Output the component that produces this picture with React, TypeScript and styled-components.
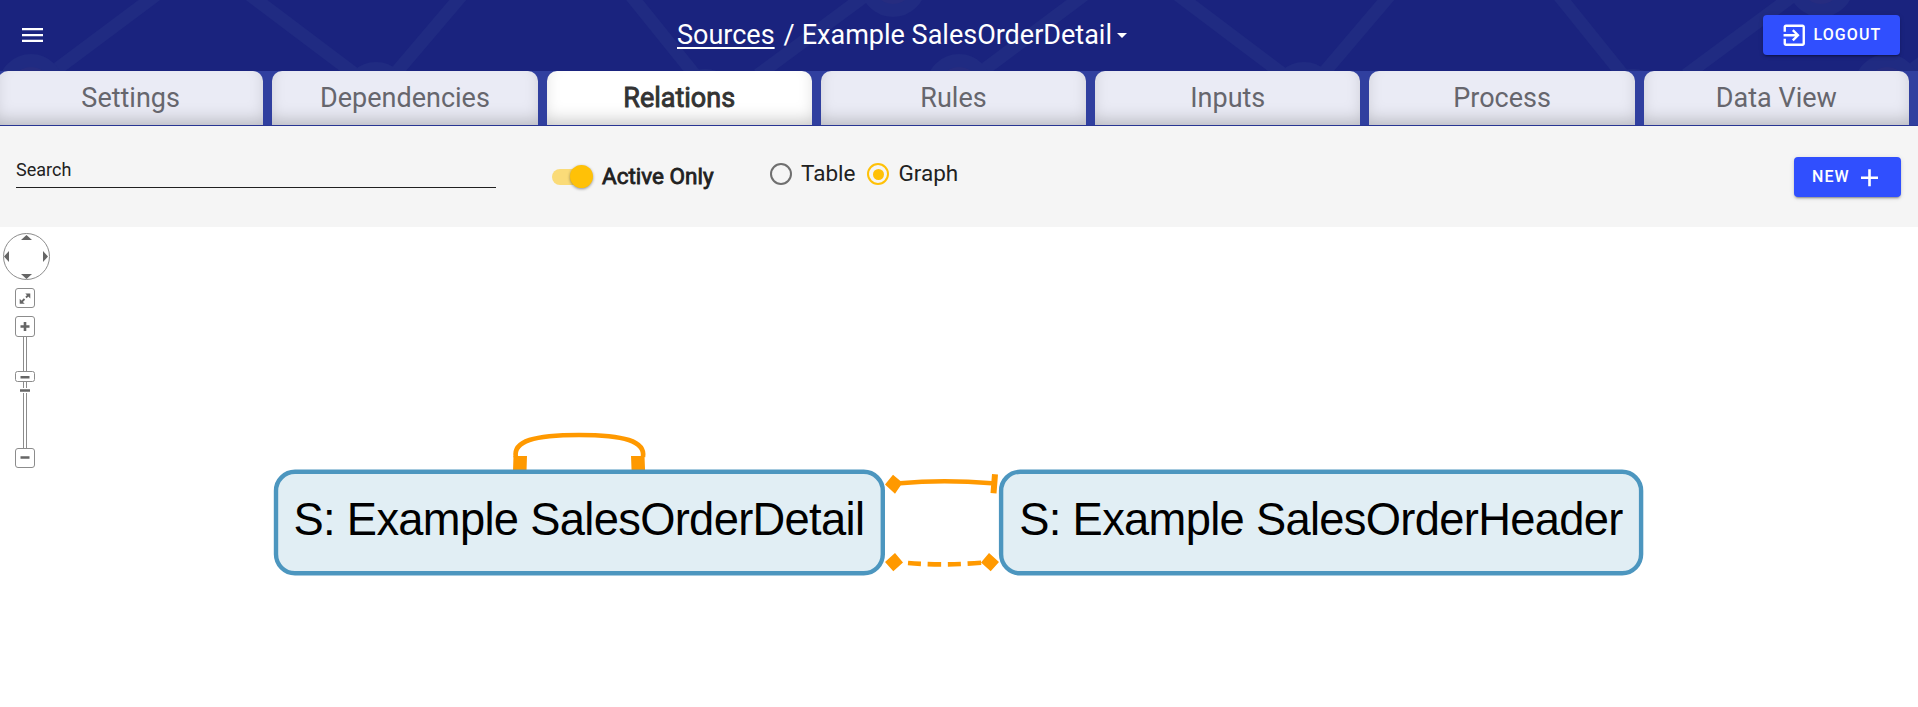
import React from 'react';
import styled, { createGlobalStyle } from 'styled-components';

const Global = createGlobalStyle`
  * { box-sizing: border-box; }
  body { margin: 0; background: #fff; font-family: Roboto, "Liberation Sans", sans-serif; overflow: hidden; }
`;

const Page = styled.div`
  width: 1918px;
  height: 707px;
  display: flex;
  flex-direction: column;
`;

const Header = styled.header`
  position: relative;
  height: 71px;
  background: #1a237e;
  display: grid;
  grid-template-columns: 655px auto 1fr;
  align-items: center;
  padding: 0 18px 1px 22px;
  color: #fff;
`;

const Pattern = styled.svg`
  position: absolute;
  inset: 0;
`;

const MenuIcon = styled.svg`
  position: relative;
  display: block;
`;

const Crumbs = styled.div`
  position: relative;
  display: flex;
  align-items: center;
  font-size: 27px;
  line-height: 32px;
  white-space: pre;
`;

const Link = styled.a`
  text-decoration: underline;
  text-decoration-thickness: 2px;
  text-underline-offset: 3px;
`;

const Slash = styled.span`
  margin: 0 7px 0 9px;
`;

const Caret = styled.span`
  margin: 0 0 0 5px;
  border: 5px solid transparent;
  border-top-color: #fff;
  border-bottom: 0;
`;

const Button = styled.button<{ $width: number }>`
  position: relative;
  justify-self: end;
  width: ${(p) => p.$width}px;
  height: 40px;
  border: 0;
  border-radius: 4px;
  padding: 0 0 0 18px;
  background: #304ffe;
  color: #fff;
  display: flex;
  align-items: center;
  font: 500 16px/20px Roboto, sans-serif;
  letter-spacing: 1.1px;
  box-shadow: 0 3px 1px -2px rgba(0, 0, 0, 0.2), 0 2px 2px rgba(0, 0, 0, 0.14), 0 1px 5px rgba(0, 0, 0, 0.12);
`;

const ExitIcon = styled.svg`
  margin: 1px 5px 0 -1px;
`;

const PlusIcon = styled.svg`
  margin-left: 1px;
`;

const Tabs = styled.nav`
  height: 55px;
  background: #303f9f;
  border-bottom: 1px solid #283593;
  display: flex;
  gap: 9px;
  padding-right: 9px;
  margin-left: -2px;
`;

const Tab = styled.div<{ $active?: boolean }>`
  flex: 1 1 0;
  display: flex;
  align-items: center;
  justify-content: center;
  border-radius: 10px 10px 0 0;
  background: ${(p) => (p.$active ? '#fff' : '#eaebf5')};
  color: ${(p) => (p.$active ? '#333' : '#66666d')};
  font-size: 27px;
  -webkit-text-stroke: ${(p) => (p.$active ? '0.9px #333' : '0')};
  box-shadow: inset 0 -9px 18px -6px rgba(0, 0, 0, 0.25);
`;

const Toolbar = styled.div`
  height: 101px;
  background: #f5f5f5;
  display: flex;
  align-items: flex-start;
  padding: 0 17px 0 16px;
  color: #212121;
`;

const Search = styled.div`
  width: 480px;
  height: 62px;
  padding-top: 33px;
  border-bottom: 1px solid #212121;
  font-size: 18px;
  line-height: 22px;
`;

const Switch = styled.div`
  width: 41px;
  height: 23px;
  margin: 39px 0 0 56px;
  display: flex;
  align-items: center;
`;

const Track = styled.div`
  width: 36px;
  height: 16px;
  border-radius: 8px;
  background: #fadb78;
  display: flex;
  align-items: center;
`;

const Knob = styled.div`
  flex: none;
  width: 23px;
  height: 23px;
  margin-left: 18px;
  border-radius: 50%;
  background: #ffc107;
  box-shadow: 0 1px 3px rgba(0, 0, 0, 0.4);
`;

const SwitchLabel = styled.div`
  margin: 37px 57px 0 9px;
  width: 111px;
  font-size: 22.5px;
  line-height: 27px;
  -webkit-text-stroke: 0.8px #212121;
  white-space: nowrap;
`;

const Radio = styled.label`
  margin: 33px 12px 0 0;
  display: flex;
  align-items: center;
  gap: 9px;
  font-size: 22.5px;
  line-height: 28px;
`;

const Ring = styled.span<{ $on?: boolean }>`
  width: 22px;
  height: 22px;
  margin-top: 2px;
  border-radius: 50%;
  border: 2px solid ${(p) => (p.$on ? '#ffc107' : '#6f6f6f')};
  padding: 3.5px;
  background: ${(p) => (p.$on ? '#ffc107' : 'transparent')} content-box;
`;

const ToolbarEnd = styled.div`
  margin: 31px 0 0 auto;
`;

const Canvas = styled.svg`
  display: block;
  flex: none;
`;

const tabs = ['Settings', 'Dependencies', 'Relations', 'Rules', 'Inputs', 'Process', 'Data View'];

function HeaderPattern() {
  return (
    <Pattern width="1918" height="71">
      <g stroke="#202b82" strokeWidth="13">
        {[-928, 0, 928, 1856].map((x) => (
          <g key={x} transform={`translate(${x} 0)`}>
            <path
              fill="none"
              d="M49 75 L156 -5 M250 -5 L356 75 M394 75 L462 -5 M630.5 -5 L695 75 M758 75 L866 -5"
            />
            <g fill="#262c80">
              <circle cx="31" cy="87" r="26.5" />
              <circle cx="376" cy="95" r="26.5" />
              <circle cx="705" cy="102" r="26.5" />
              <circle cx="893" cy="-16" r="26.5" />
            </g>
          </g>
        ))}
      </g>
    </Pattern>
  );
}

function Navigator() {
  return (
    <g fill="none" stroke="#8c8c8c">
      <circle cx="26.5" cy="29.5" r="23" fill="#fff" />
      <g fill="#666" stroke="none">
        <path d="M21 13h11l-5.5-5zM21 47h11l-5.5 5zM9 24v11l-5-5.5zM43 24v11l5-5.5z" />
      </g>
      <path d="M23.5 109V222M26.5 109V222" />
      <rect x="15.5" y="61.5" width="19" height="19" rx="2.5" fill="#fff" />
      <rect x="15.5" y="89.5" width="19" height="20" rx="2.5" fill="#fff" />
      <rect x="15.5" y="221.5" width="19" height="19" rx="2.5" fill="#fff" />
      <rect x="15.5" y="144.5" width="19" height="10" rx="2" fill="#fff" />
      <rect x="20" y="161" width="10" height="5" fill="#fff" stroke="none" />
      <g stroke="#666" strokeWidth="2.6">
        <path d="M20.5 99.5h9M25 95v9M20.5 150.2h9M20 163.5h10M20.5 230.5h9" />
      </g>
      <path d="M21.5 75l3-3M26 70.5l3-3" stroke="#666" strokeWidth="1.8" />
      <path d="M30.3 66.5v5l-5-5zM19.7 76.8v-5l5 5z" fill="#666" stroke="none" />
    </g>
  );
}

function Graph() {
  return (
    <Canvas width="1918" height="480" viewBox="0 0 1918 480">
      <Navigator />
      <g fill="none" stroke="#ff9900" strokeWidth="4.6">
        <path d="M515.8 230C513 214 534 208 579 208S645.5 214 643 230" />
        <path d="M900 256.3Q943 252.3 992 256.3" />
        <path d="M908 336Q943 339 984 335.5" strokeDasharray="13.3 6.7" />
      </g>
      <g fill="#ff9900">
        <path d="M513.5 229h13.5l-.5 15h-13.5zM631 229h13.5l.6 15h-13.5z" />
      </g>
      <g fill="#e1eef4" stroke="#4c96bf" strokeWidth="4.4">
        <rect x="276" y="244.8" width="606.8" height="101.5" rx="19" />
        <rect x="1001.1" y="244.8" width="640" height="101.5" rx="19" />
      </g>
      <g fill="#ff9900">
        <path d="M885 257.5l8-9.7 9.5 8-7.5 11zM885 335l10-9 8 9.5-9.7 8.7zM999 335l-10-9-8 9.5 9.7 8.7zM992 247l6 .5-1.5 19-6-.5z" />
      </g>
      <g fill="#000" fontFamily="'Liberation Sans', Arial, sans-serif" fontSize="45.3">
        <text x="293.5" y="307.5" textLength="571.5">S: Example SalesOrderDetail</text>
        <text x="1019.3" y="307.5" textLength="604">S: Example SalesOrderHeader</text>
      </g>
    </Canvas>
  );
}

export default function App() {
  return (
    <Page>
      <Global />
      <Header>
        <HeaderPattern />
        <MenuIcon width="21" height="16" viewBox="0 0 21 16" fill="#fff">
          <path d="M0 1h21v2.3H0zM0 6.9h21v2.3H0zM0 12.8h21v2.3H0z" />
        </MenuIcon>
        <Crumbs>
          <Link>Sources</Link>
          <Slash>/</Slash>
          <span>Example SalesOrderDetail</span>
          <Caret />
        </Crumbs>
        <Button $width={137}>
          <ExitIcon width="28.5" height="28.5" viewBox="0 0 24 24" fill="#fff">
            <path d="M10.09 15.59L11.5 17l5-5-5-5-1.41 1.41L12.67 11H3v2h9.67l-2.58 2.59zM19 3H5c-1.11 0-2 .9-2 2v4h2V5h14v14H5v-4H3v4c0 1.1.89 2 2 2h14c1.1 0 2-.9 2-2V5c0-1.1-.9-2-2-2z" />
          </ExitIcon>
          LOGOUT
        </Button>
      </Header>
      <Tabs>
        {tabs.map((t) => (
          <Tab key={t} $active={t === 'Relations'}>{t}</Tab>
        ))}
      </Tabs>
      <Toolbar>
        <Search>Search</Search>
        <Switch>
          <Track><Knob /></Track>
        </Switch>
        <SwitchLabel>Active Only</SwitchLabel>
        <Radio><Ring />Table</Radio>
        <Radio><Ring $on />Graph</Radio>
        <ToolbarEnd>
          <Button $width={107}>
            NEW
            <PlusIcon width="30" height="24" viewBox="0 0 30 24" stroke="#fff" strokeWidth="2.6">
              <path d="M10 12.7H27M18.5 4.2V21.2" />
            </PlusIcon>
          </Button>
        </ToolbarEnd>
      </Toolbar>
      <Graph />
    </Page>
  );
}
